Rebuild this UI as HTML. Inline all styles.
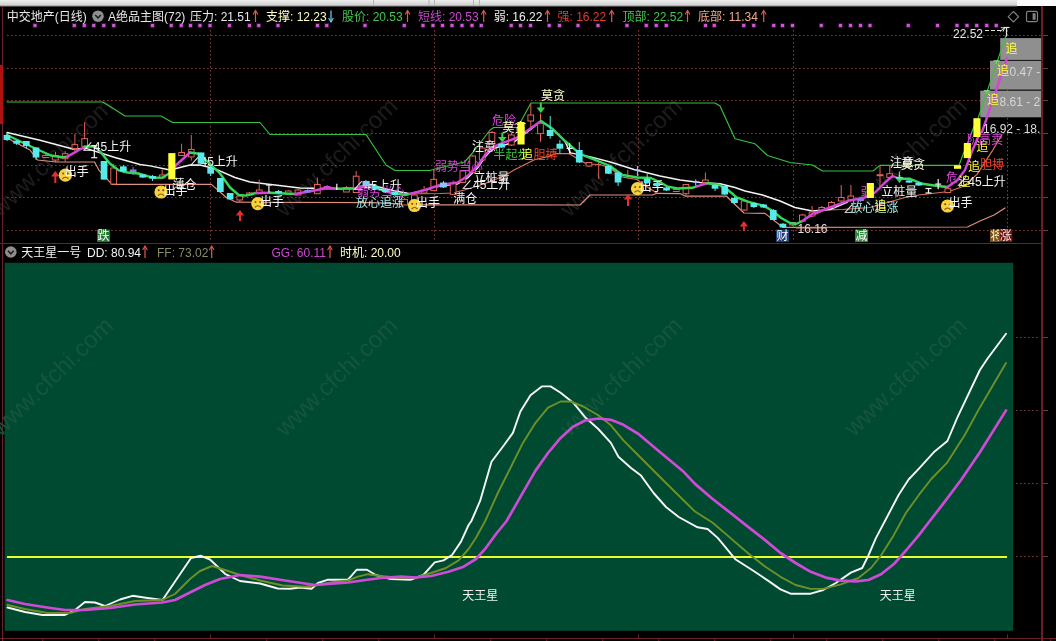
<!DOCTYPE html>
<html lang="zh-CN"><head><meta charset="utf-8"><title>中交地产 A绝品主图 天王星一号</title>
<style>html,body{margin:0;padding:0;background:#000;overflow:hidden}svg{display:block;will-change:transform}text{white-space:pre}</style>
</head><body>
<svg width="1056" height="641" viewBox="0 0 1056 641" font-family='"Liberation Sans","Noto Sans CJK SC",sans-serif' font-size="12" font-weight="400">
<rect x="0.0" y="0.0" width="1056.0" height="641.0" fill="#000" />
<defs><linearGradient id="ts" x1="0" y1="0" x2="0" y2="1"><stop offset="0" stop-color="#eeeeee"/><stop offset="0.7" stop-color="#d4d4d4"/><stop offset="1" stop-color="#8c8c8c"/></linearGradient></defs>
<rect x="0.0" y="0.0" width="1017.0" height="6.5" fill="url(#ts)" />
<rect x="1017.0" y="0.0" width="39.0" height="6.0" fill="#fbfbfb" />
<line x1="373.5" y1="0.0" x2="373.5" y2="5.0" stroke="#b4b4b4" stroke-width="1" />
<line x1="429.0" y1="0.0" x2="429.0" y2="5.0" stroke="#b4b4b4" stroke-width="1" />
<line x1="434.5" y1="0.0" x2="434.5" y2="5.0" stroke="#b4b4b4" stroke-width="1" />
<line x1="473.5" y1="0.0" x2="473.5" y2="5.0" stroke="#b4b4b4" stroke-width="1" />
<line x1="479.5" y1="0.0" x2="479.5" y2="5.0" stroke="#b4b4b4" stroke-width="1" />
<text transform="translate(57.5 163.0) rotate(-44)" text-anchor="middle" font-size="24" fill="#1d1d1d">www.cfchi.com</text>
<text transform="translate(342.0 163.0) rotate(-44)" text-anchor="middle" font-size="24" fill="#1d1d1d">www.cfchi.com</text>
<text transform="translate(626.5 163.0) rotate(-44)" text-anchor="middle" font-size="24" fill="#1d1d1d">www.cfchi.com</text>
<text transform="translate(911.0 163.0) rotate(-44)" text-anchor="middle" font-size="24" fill="#1d1d1d">www.cfchi.com</text>
<line x1="7.0" y1="35.5" x2="1041.0" y2="35.5" stroke="#581e1c" stroke-width="1" stroke-dasharray="2 2" shape-rendering="crispEdges"/>
<line x1="7.0" y1="35.5" x2="1041.0" y2="35.5" stroke="#7a4042" stroke-width="1" stroke-dasharray="1 3" shape-rendering="crispEdges"/>
<line x1="1043.0" y1="35.5" x2="1047.5" y2="35.5" stroke="#6a4040" stroke-width="1" shape-rendering="crispEdges"/>
<line x1="7.0" y1="68.5" x2="1041.0" y2="68.5" stroke="#581e1c" stroke-width="1" stroke-dasharray="2 2" shape-rendering="crispEdges"/>
<line x1="7.0" y1="68.5" x2="1041.0" y2="68.5" stroke="#7a4042" stroke-width="1" stroke-dasharray="1 3" shape-rendering="crispEdges"/>
<line x1="1043.0" y1="68.5" x2="1047.5" y2="68.5" stroke="#6a4040" stroke-width="1" shape-rendering="crispEdges"/>
<line x1="7.0" y1="100.5" x2="1041.0" y2="100.5" stroke="#581e1c" stroke-width="1" stroke-dasharray="2 2" shape-rendering="crispEdges"/>
<line x1="7.0" y1="100.5" x2="1041.0" y2="100.5" stroke="#7a4042" stroke-width="1" stroke-dasharray="1 3" shape-rendering="crispEdges"/>
<line x1="1043.0" y1="100.5" x2="1047.5" y2="100.5" stroke="#6a4040" stroke-width="1" shape-rendering="crispEdges"/>
<line x1="7.0" y1="133.5" x2="1041.0" y2="133.5" stroke="#581e1c" stroke-width="1" stroke-dasharray="2 2" shape-rendering="crispEdges"/>
<line x1="7.0" y1="133.5" x2="1041.0" y2="133.5" stroke="#7a4042" stroke-width="1" stroke-dasharray="1 3" shape-rendering="crispEdges"/>
<line x1="1043.0" y1="133.5" x2="1047.5" y2="133.5" stroke="#6a4040" stroke-width="1" shape-rendering="crispEdges"/>
<line x1="7.0" y1="165.5" x2="1041.0" y2="165.5" stroke="#581e1c" stroke-width="1" stroke-dasharray="2 2" shape-rendering="crispEdges"/>
<line x1="7.0" y1="165.5" x2="1041.0" y2="165.5" stroke="#7a4042" stroke-width="1" stroke-dasharray="1 3" shape-rendering="crispEdges"/>
<line x1="1043.0" y1="165.5" x2="1047.5" y2="165.5" stroke="#6a4040" stroke-width="1" shape-rendering="crispEdges"/>
<line x1="7.0" y1="197.5" x2="1041.0" y2="197.5" stroke="#581e1c" stroke-width="1" stroke-dasharray="2 2" shape-rendering="crispEdges"/>
<line x1="7.0" y1="197.5" x2="1041.0" y2="197.5" stroke="#7a4042" stroke-width="1" stroke-dasharray="1 3" shape-rendering="crispEdges"/>
<line x1="1043.0" y1="197.5" x2="1047.5" y2="197.5" stroke="#6a4040" stroke-width="1" shape-rendering="crispEdges"/>
<line x1="7.0" y1="230.5" x2="1041.0" y2="230.5" stroke="#581e1c" stroke-width="1" stroke-dasharray="2 2" shape-rendering="crispEdges"/>
<line x1="7.0" y1="230.5" x2="1041.0" y2="230.5" stroke="#7a4042" stroke-width="1" stroke-dasharray="1 3" shape-rendering="crispEdges"/>
<line x1="1043.0" y1="230.5" x2="1047.5" y2="230.5" stroke="#6a4040" stroke-width="1" shape-rendering="crispEdges"/>
<line x1="210.5" y1="30.0" x2="210.5" y2="242.0" stroke="#581e1c" stroke-width="1" stroke-dasharray="2 2" shape-rendering="crispEdges"/>
<line x1="210.5" y1="30.0" x2="210.5" y2="242.0" stroke="#7a4042" stroke-width="1" stroke-dasharray="1 3" shape-rendering="crispEdges"/>
<line x1="434.5" y1="30.0" x2="434.5" y2="242.0" stroke="#581e1c" stroke-width="1" stroke-dasharray="2 2" shape-rendering="crispEdges"/>
<line x1="434.5" y1="30.0" x2="434.5" y2="242.0" stroke="#7a4042" stroke-width="1" stroke-dasharray="1 3" shape-rendering="crispEdges"/>
<line x1="638.5" y1="30.0" x2="638.5" y2="242.0" stroke="#581e1c" stroke-width="1" stroke-dasharray="2 2" shape-rendering="crispEdges"/>
<line x1="638.5" y1="30.0" x2="638.5" y2="242.0" stroke="#7a4042" stroke-width="1" stroke-dasharray="1 3" shape-rendering="crispEdges"/>
<line x1="793.5" y1="30.0" x2="793.5" y2="242.0" stroke="#581e1c" stroke-width="1" stroke-dasharray="2 2" shape-rendering="crispEdges"/>
<line x1="793.5" y1="30.0" x2="793.5" y2="242.0" stroke="#7a4042" stroke-width="1" stroke-dasharray="1 3" shape-rendering="crispEdges"/>
<line x1="1007.5" y1="30.0" x2="1007.5" y2="242.0" stroke="#581e1c" stroke-width="1" stroke-dasharray="2 2" shape-rendering="crispEdges"/>
<line x1="1007.5" y1="30.0" x2="1007.5" y2="242.0" stroke="#7a4042" stroke-width="1" stroke-dasharray="1 3" shape-rendering="crispEdges"/>
<line x1="2.5" y1="6.0" x2="2.5" y2="641.0" stroke="#6c222c" stroke-width="1" shape-rendering="crispEdges"/>
<rect x="0.0" y="65.0" width="3.2" height="59.0" fill="#b01212" />
<rect x="1041.0" y="6.0" width="2.0" height="635.0" fill="#6e1e22" />
<line x1="0.0" y1="243.5" x2="1041.5" y2="243.5" stroke="#6c222c" stroke-width="1" shape-rendering="crispEdges"/>
<line x1="0.0" y1="638.5" x2="1056.0" y2="638.5" stroke="#6c222c" stroke-width="1" shape-rendering="crispEdges"/>
<line x1="210.5" y1="634.5" x2="210.5" y2="638.0" stroke="#6c222c" stroke-width="1" />
<line x1="434.5" y1="634.5" x2="434.5" y2="638.0" stroke="#6c222c" stroke-width="1" />
<line x1="638.5" y1="634.5" x2="638.5" y2="638.0" stroke="#6c222c" stroke-width="1" />
<line x1="793.5" y1="634.5" x2="793.5" y2="638.0" stroke="#6c222c" stroke-width="1" />
<line x1="1007.5" y1="634.5" x2="1007.5" y2="638.0" stroke="#6c222c" stroke-width="1" />
<line x1="42.7" y1="639.0" x2="42.7" y2="641.0" stroke="#6c222c" stroke-width="1" />
<line x1="98.7" y1="639.0" x2="98.7" y2="641.0" stroke="#6c222c" stroke-width="1" />
<line x1="154.7" y1="639.0" x2="154.7" y2="641.0" stroke="#6c222c" stroke-width="1" />
<line x1="266.7" y1="639.0" x2="266.7" y2="641.0" stroke="#6c222c" stroke-width="1" />
<line x1="322.7" y1="639.0" x2="322.7" y2="641.0" stroke="#6c222c" stroke-width="1" />
<line x1="378.7" y1="639.0" x2="378.7" y2="641.0" stroke="#6c222c" stroke-width="1" />
<line x1="490.7" y1="639.0" x2="490.7" y2="641.0" stroke="#6c222c" stroke-width="1" />
<line x1="546.7" y1="639.0" x2="546.7" y2="641.0" stroke="#6c222c" stroke-width="1" />
<line x1="602.7" y1="639.0" x2="602.7" y2="641.0" stroke="#6c222c" stroke-width="1" />
<line x1="658.7" y1="639.0" x2="658.7" y2="641.0" stroke="#6c222c" stroke-width="1" />
<line x1="714.7" y1="639.0" x2="714.7" y2="641.0" stroke="#6c222c" stroke-width="1" />
<line x1="770.7" y1="639.0" x2="770.7" y2="641.0" stroke="#6c222c" stroke-width="1" />
<line x1="826.7" y1="639.0" x2="826.7" y2="641.0" stroke="#6c222c" stroke-width="1" />
<line x1="882.7" y1="639.0" x2="882.7" y2="641.0" stroke="#6c222c" stroke-width="1" />
<line x1="938.7" y1="639.0" x2="938.7" y2="641.0" stroke="#6c222c" stroke-width="1" />
<line x1="994.7" y1="639.0" x2="994.7" y2="641.0" stroke="#6c222c" stroke-width="1" />
<line x1="1050.7" y1="639.0" x2="1050.7" y2="641.0" stroke="#6c222c" stroke-width="1" />
<rect x="32.7" y="23.2" width="4.6" height="4.6" fill="#4a154e" />
<rect x="33.5" y="24.0" width="3.0" height="3.0" fill="#c95ad0" />
<rect x="72.0" y="23.2" width="4.6" height="4.6" fill="#4a154e" />
<rect x="72.8" y="24.0" width="3.0" height="3.0" fill="#c95ad0" />
<rect x="82.0" y="23.2" width="4.6" height="4.6" fill="#4a154e" />
<rect x="82.8" y="24.0" width="3.0" height="3.0" fill="#c95ad0" />
<rect x="91.5" y="23.2" width="4.6" height="4.6" fill="#4a154e" />
<rect x="92.2" y="24.0" width="3.0" height="3.0" fill="#c95ad0" />
<rect x="101.5" y="23.2" width="4.6" height="4.6" fill="#4a154e" />
<rect x="102.2" y="24.0" width="3.0" height="3.0" fill="#c95ad0" />
<rect x="111.5" y="23.2" width="4.6" height="4.6" fill="#4a154e" />
<rect x="112.2" y="24.0" width="3.0" height="3.0" fill="#c95ad0" />
<rect x="150.2" y="23.2" width="4.6" height="4.6" fill="#4a154e" />
<rect x="151.0" y="24.0" width="3.0" height="3.0" fill="#c95ad0" />
<rect x="168.9" y="23.2" width="4.6" height="4.6" fill="#4a154e" />
<rect x="169.8" y="24.0" width="3.0" height="3.0" fill="#c95ad0" />
<rect x="178.9" y="23.2" width="4.6" height="4.6" fill="#4a154e" />
<rect x="179.8" y="24.0" width="3.0" height="3.0" fill="#c95ad0" />
<rect x="188.2" y="23.2" width="4.6" height="4.6" fill="#4a154e" />
<rect x="189.0" y="24.0" width="3.0" height="3.0" fill="#c95ad0" />
<rect x="197.7" y="23.2" width="4.6" height="4.6" fill="#4a154e" />
<rect x="198.5" y="24.0" width="3.0" height="3.0" fill="#c95ad0" />
<rect x="207.7" y="23.2" width="4.6" height="4.6" fill="#4a154e" />
<rect x="208.5" y="24.0" width="3.0" height="3.0" fill="#c95ad0" />
<rect x="227.2" y="23.2" width="4.6" height="4.6" fill="#4a154e" />
<rect x="228.0" y="24.0" width="3.0" height="3.0" fill="#c95ad0" />
<rect x="247.2" y="23.2" width="4.6" height="4.6" fill="#4a154e" />
<rect x="248.0" y="24.0" width="3.0" height="3.0" fill="#c95ad0" />
<rect x="256.4" y="23.2" width="4.6" height="4.6" fill="#4a154e" />
<rect x="257.2" y="24.0" width="3.0" height="3.0" fill="#c95ad0" />
<rect x="275.7" y="23.2" width="4.6" height="4.6" fill="#4a154e" />
<rect x="276.5" y="24.0" width="3.0" height="3.0" fill="#c95ad0" />
<rect x="315.2" y="23.2" width="4.6" height="4.6" fill="#4a154e" />
<rect x="316.0" y="24.0" width="3.0" height="3.0" fill="#c95ad0" />
<rect x="324.4" y="23.2" width="4.6" height="4.6" fill="#4a154e" />
<rect x="325.2" y="24.0" width="3.0" height="3.0" fill="#c95ad0" />
<rect x="362.7" y="23.2" width="4.6" height="4.6" fill="#4a154e" />
<rect x="363.5" y="24.0" width="3.0" height="3.0" fill="#c95ad0" />
<rect x="401.9" y="23.2" width="4.6" height="4.6" fill="#4a154e" />
<rect x="402.8" y="24.0" width="3.0" height="3.0" fill="#c95ad0" />
<rect x="420.7" y="23.2" width="4.6" height="4.6" fill="#4a154e" />
<rect x="421.5" y="24.0" width="3.0" height="3.0" fill="#c95ad0" />
<rect x="430.7" y="23.2" width="4.6" height="4.6" fill="#4a154e" />
<rect x="431.5" y="24.0" width="3.0" height="3.0" fill="#c95ad0" />
<rect x="440.2" y="23.2" width="4.6" height="4.6" fill="#4a154e" />
<rect x="441.0" y="24.0" width="3.0" height="3.0" fill="#c95ad0" />
<rect x="449.7" y="23.2" width="4.6" height="4.6" fill="#4a154e" />
<rect x="450.5" y="24.0" width="3.0" height="3.0" fill="#c95ad0" />
<rect x="459.7" y="23.2" width="4.6" height="4.6" fill="#4a154e" />
<rect x="460.5" y="24.0" width="3.0" height="3.0" fill="#c95ad0" />
<rect x="469.7" y="23.2" width="4.6" height="4.6" fill="#4a154e" />
<rect x="470.5" y="24.0" width="3.0" height="3.0" fill="#c95ad0" />
<rect x="478.9" y="23.2" width="4.6" height="4.6" fill="#4a154e" />
<rect x="479.8" y="24.0" width="3.0" height="3.0" fill="#c95ad0" />
<rect x="508.9" y="23.2" width="4.6" height="4.6" fill="#4a154e" />
<rect x="509.8" y="24.0" width="3.0" height="3.0" fill="#c95ad0" />
<rect x="518.2" y="23.2" width="4.6" height="4.6" fill="#4a154e" />
<rect x="519.0" y="24.0" width="3.0" height="3.0" fill="#c95ad0" />
<rect x="528.2" y="23.2" width="4.6" height="4.6" fill="#4a154e" />
<rect x="529.0" y="24.0" width="3.0" height="3.0" fill="#c95ad0" />
<rect x="547.0" y="23.2" width="4.6" height="4.6" fill="#4a154e" />
<rect x="547.8" y="24.0" width="3.0" height="3.0" fill="#c95ad0" />
<rect x="557.2" y="23.2" width="4.6" height="4.6" fill="#4a154e" />
<rect x="558.0" y="24.0" width="3.0" height="3.0" fill="#c95ad0" />
<rect x="575.7" y="23.2" width="4.6" height="4.6" fill="#4a154e" />
<rect x="576.5" y="24.0" width="3.0" height="3.0" fill="#c95ad0" />
<rect x="595.7" y="23.2" width="4.6" height="4.6" fill="#4a154e" />
<rect x="596.5" y="24.0" width="3.0" height="3.0" fill="#c95ad0" />
<rect x="624.7" y="23.2" width="4.6" height="4.6" fill="#4a154e" />
<rect x="625.5" y="24.0" width="3.0" height="3.0" fill="#c95ad0" />
<rect x="644.0" y="23.2" width="4.6" height="4.6" fill="#4a154e" />
<rect x="644.8" y="24.0" width="3.0" height="3.0" fill="#c95ad0" />
<rect x="654.0" y="23.2" width="4.6" height="4.6" fill="#4a154e" />
<rect x="654.8" y="24.0" width="3.0" height="3.0" fill="#c95ad0" />
<rect x="664.0" y="23.2" width="4.6" height="4.6" fill="#4a154e" />
<rect x="664.8" y="24.0" width="3.0" height="3.0" fill="#c95ad0" />
<rect x="703.2" y="23.2" width="4.6" height="4.6" fill="#4a154e" />
<rect x="704.0" y="24.0" width="3.0" height="3.0" fill="#c95ad0" />
<rect x="712.0" y="23.2" width="4.6" height="4.6" fill="#4a154e" />
<rect x="712.8" y="24.0" width="3.0" height="3.0" fill="#c95ad0" />
<rect x="741.5" y="23.2" width="4.6" height="4.6" fill="#4a154e" />
<rect x="742.2" y="24.0" width="3.0" height="3.0" fill="#c95ad0" />
<rect x="751.5" y="23.2" width="4.6" height="4.6" fill="#4a154e" />
<rect x="752.2" y="24.0" width="3.0" height="3.0" fill="#c95ad0" />
<rect x="771.5" y="23.2" width="4.6" height="4.6" fill="#4a154e" />
<rect x="772.2" y="24.0" width="3.0" height="3.0" fill="#c95ad0" />
<rect x="780.2" y="23.2" width="4.6" height="4.6" fill="#4a154e" />
<rect x="781.0" y="24.0" width="3.0" height="3.0" fill="#c95ad0" />
<rect x="790.2" y="23.2" width="4.6" height="4.6" fill="#4a154e" />
<rect x="791.0" y="24.0" width="3.0" height="3.0" fill="#c95ad0" />
<rect x="819.0" y="23.2" width="4.6" height="4.6" fill="#4a154e" />
<rect x="819.8" y="24.0" width="3.0" height="3.0" fill="#c95ad0" />
<rect x="838.2" y="23.2" width="4.6" height="4.6" fill="#4a154e" />
<rect x="839.0" y="24.0" width="3.0" height="3.0" fill="#c95ad0" />
<rect x="848.2" y="23.2" width="4.6" height="4.6" fill="#4a154e" />
<rect x="849.0" y="24.0" width="3.0" height="3.0" fill="#c95ad0" />
<rect x="858.2" y="23.2" width="4.6" height="4.6" fill="#4a154e" />
<rect x="859.0" y="24.0" width="3.0" height="3.0" fill="#c95ad0" />
<rect x="867.7" y="23.2" width="4.6" height="4.6" fill="#4a154e" />
<rect x="868.5" y="24.0" width="3.0" height="3.0" fill="#c95ad0" />
<rect x="906.0" y="23.2" width="4.6" height="4.6" fill="#4a154e" />
<rect x="906.8" y="24.0" width="3.0" height="3.0" fill="#c95ad0" />
<rect x="935.2" y="23.2" width="4.6" height="4.6" fill="#4a154e" />
<rect x="936.0" y="24.0" width="3.0" height="3.0" fill="#c95ad0" />
<rect x="954.7" y="23.2" width="4.6" height="4.6" fill="#4a154e" />
<rect x="955.5" y="24.0" width="3.0" height="3.0" fill="#c95ad0" />
<rect x="964.7" y="23.2" width="4.6" height="4.6" fill="#4a154e" />
<rect x="965.5" y="24.0" width="3.0" height="3.0" fill="#c95ad0" />
<rect x="974.5" y="23.2" width="4.6" height="4.6" fill="#4a154e" />
<rect x="975.2" y="24.0" width="3.0" height="3.0" fill="#c95ad0" />
<rect x="984.5" y="23.2" width="4.6" height="4.6" fill="#4a154e" />
<rect x="985.2" y="24.0" width="3.0" height="3.0" fill="#c95ad0" />
<rect x="994.0" y="23.2" width="4.6" height="4.6" fill="#4a154e" />
<rect x="994.8" y="24.0" width="3.0" height="3.0" fill="#c95ad0" />
<rect x="1000.2" y="38.1" width="40.8" height="21.8" fill="#8f8f8f" />
<rect x="990.0" y="60.8" width="51.0" height="28.8" fill="#8f8f8f" />
<rect x="980.2" y="90.7" width="60.8" height="26.6" fill="#8f8f8f" />
<polyline points="7.0,102.0 102.5,102.0 111.0,107.0 125.0,116.0 161.0,116.0 172.5,122.5 260.0,122.5 270.0,134.5 366.0,134.5 386.0,165.0 395.0,170.5 430.0,170.5 435.0,169.0 464.5,162.0 473.0,152.5 490.0,130.0 493.8,127.5 517.5,127.5 531.0,103.0 715.0,103.0 720.0,106.0 735.0,138.8 755.0,143.8 767.5,155.5 790.0,162.5 812.5,165.0 822.5,171.0 873.0,171.0 880.0,165.4 959.0,165.4 964.0,152.0 972.6,130.0 978.4,117.3 1005.9,35.9" fill="none" stroke="#38c23c" stroke-width="1.15" stroke-linejoin="round" stroke-linecap="round" />
<polyline points="7.0,137.5 12.5,141.0 30.0,150.0 37.5,160.0 56.0,162.0 94.6,162.0 99.0,170.3 112.0,184.3 211.3,184.4 226.3,197.5 236.3,202.2 372.0,202.7 420.0,204.8 580.0,205.0 590.0,195.0 652.5,195.0 656.7,193.3 680.4,193.7 685.6,196.2 726.4,196.2 744.0,213.0 765.0,213.4 782.7,227.3 967.5,227.0 980.0,221.0 994.0,215.0 1005.0,208.0" fill="none" stroke="#e0907e" stroke-width="1.2" stroke-linejoin="round" stroke-linecap="round" />
<polyline points="403.0,194.0 440.0,193.5 452.0,193.0 464.5,190.0 484.5,183.8 504.0,176.0 514.0,170.0 535.0,159.5 548.0,156.6 555.6,153.6 569.0,153.6 576.4,158.0 586.7,164.0 600.0,164.5 610.0,168.0 622.0,177.0 637.0,179.5 645.0,185.6 656.7,193.0" fill="none" stroke="#e0705c" stroke-width="1.2" stroke-linejoin="round" stroke-linecap="round" />
<polyline points="802.5,220.0 825.0,210.0 842.5,209.5 870.0,207.5 905.0,197.5 919.0,195.0 949.0,191.5 963.7,186.3 977.0,174.4 993.3,149.3 1002.0,134.4" fill="none" stroke="#e0705c" stroke-width="1.2" stroke-linejoin="round" stroke-linecap="round" />
<polyline points="7.0,132.5 40.0,140.2 72.8,149.0 86.0,148.4 115.0,157.5 140.0,164.5 150.0,165.9 170.0,170.0 180.0,167.5 190.0,165.0 200.0,165.0 215.0,168.8 235.0,177.5 250.0,182.0 275.0,185.0 300.0,188.0 337.5,188.8 360.0,188.0 370.0,184.5 390.0,190.0 410.0,193.8 425.0,190.0 440.0,186.0 457.5,184.0 467.5,178.0 477.5,168.0 485.0,157.0 492.5,149.0 514.0,142.0 530.0,130.0 541.0,121.0 552.5,129.0 565.0,141.5 570.4,152.9 589.7,156.6 612.0,162.5 634.0,169.5 640.0,171.0 660.0,176.0 680.0,180.0 700.0,182.5 720.0,183.8 735.0,187.5 745.0,191.0 762.5,195.0 780.0,201.0 795.0,207.5 812.5,211.0 830.0,209.5 847.5,202.0" fill="none" stroke="#f4f4f4" stroke-width="1.45" stroke-linejoin="round" stroke-linecap="round" />
<line x1="45.8" y1="153.0" x2="45.8" y2="158.0" stroke="#e26258" stroke-width="1" />
<rect x="42.9" y="155.5" width="5.7" height="2.0" fill="#000" stroke="#e26258" stroke-width="1"/>
<line x1="55.5" y1="152.0" x2="55.5" y2="162.0" stroke="#e26258" stroke-width="1" />
<rect x="52.6" y="155.5" width="5.7" height="4.5" fill="#000" stroke="#e26258" stroke-width="1"/>
<line x1="65.2" y1="151.0" x2="65.2" y2="162.0" stroke="#e26258" stroke-width="1" />
<rect x="62.3" y="153.7" width="5.7" height="5.0" fill="#000" stroke="#e26258" stroke-width="1"/>
<line x1="74.9" y1="134.0" x2="74.9" y2="153.0" stroke="#e26258" stroke-width="1" />
<rect x="72.0" y="144.6" width="5.7" height="3.8" fill="#000" stroke="#e26258" stroke-width="1"/>
<line x1="84.6" y1="122.2" x2="84.6" y2="150.0" stroke="#e26258" stroke-width="1" />
<rect x="81.8" y="138.6" width="5.7" height="7.6" fill="#000" stroke="#e26258" stroke-width="1"/>
<line x1="113.7" y1="163.7" x2="113.7" y2="184.0" stroke="#e26258" stroke-width="1" />
<rect x="110.8" y="168.0" width="5.7" height="16.0" fill="#000" stroke="#e26258" stroke-width="1"/>
<line x1="162.2" y1="169.5" x2="162.2" y2="178.0" stroke="#e26258" stroke-width="1" />
<rect x="159.3" y="175.0" width="5.7" height="3.0" fill="#000" stroke="#e26258" stroke-width="1"/>
<line x1="181.6" y1="143.7" x2="181.6" y2="155.5" stroke="#e26258" stroke-width="1" />
<rect x="178.8" y="152.5" width="5.7" height="3.0" fill="#000" stroke="#e26258" stroke-width="1"/>
<line x1="191.3" y1="135.0" x2="191.3" y2="160.6" stroke="#e26258" stroke-width="1" />
<rect x="188.4" y="149.4" width="5.7" height="7.5" fill="#000" stroke="#e26258" stroke-width="1"/>
<line x1="239.8" y1="196.0" x2="239.8" y2="202.5" stroke="#e26258" stroke-width="1" />
<rect x="236.9" y="196.0" width="5.7" height="4.0" fill="#000" stroke="#e26258" stroke-width="1"/>
<line x1="249.5" y1="192.0" x2="249.5" y2="196.0" stroke="#e26258" stroke-width="1" />
<rect x="246.6" y="193.0" width="5.7" height="2.0" fill="#000" stroke="#e26258" stroke-width="1"/>
<line x1="259.2" y1="179.5" x2="259.2" y2="194.0" stroke="#e26258" stroke-width="1" />
<rect x="256.4" y="190.0" width="5.7" height="3.7" fill="#000" stroke="#e26258" stroke-width="1"/>
<line x1="288.3" y1="190.0" x2="288.3" y2="194.0" stroke="#e26258" stroke-width="1" />
<rect x="285.4" y="191.0" width="5.7" height="3.0" fill="#000" stroke="#e26258" stroke-width="1"/>
<line x1="298.0" y1="189.0" x2="298.0" y2="195.0" stroke="#e26258" stroke-width="1" />
<rect x="295.1" y="190.0" width="5.7" height="5.0" fill="#000" stroke="#e26258" stroke-width="1"/>
<line x1="317.4" y1="177.5" x2="317.4" y2="193.7" stroke="#e26258" stroke-width="1" />
<rect x="314.5" y="184.5" width="5.7" height="9.2" fill="#000" stroke="#e26258" stroke-width="1"/>
<line x1="346.5" y1="186.0" x2="346.5" y2="192.0" stroke="#e26258" stroke-width="1" />
<rect x="343.6" y="187.5" width="5.7" height="4.5" fill="#000" stroke="#e26258" stroke-width="1"/>
<line x1="356.2" y1="171.0" x2="356.2" y2="192.5" stroke="#e26258" stroke-width="1" />
<rect x="353.3" y="176.2" width="5.7" height="16.3" fill="#000" stroke="#e26258" stroke-width="1"/>
<line x1="404.7" y1="198.0" x2="404.7" y2="205.0" stroke="#e26258" stroke-width="1" />
<rect x="401.8" y="199.4" width="5.7" height="5.6" fill="#000" stroke="#e26258" stroke-width="1"/>
<line x1="414.4" y1="194.0" x2="414.4" y2="201.0" stroke="#e26258" stroke-width="1" />
<rect x="411.5" y="195.0" width="5.7" height="5.0" fill="#000" stroke="#e26258" stroke-width="1"/>
<line x1="424.1" y1="186.0" x2="424.1" y2="193.0" stroke="#e26258" stroke-width="1" />
<rect x="421.2" y="190.0" width="5.7" height="3.0" fill="#000" stroke="#e26258" stroke-width="1"/>
<line x1="433.8" y1="170.0" x2="433.8" y2="190.6" stroke="#e26258" stroke-width="1" />
<rect x="430.9" y="179.4" width="5.7" height="11.2" fill="#000" stroke="#e26258" stroke-width="1"/>
<line x1="453.2" y1="180.6" x2="453.2" y2="194.4" stroke="#e26258" stroke-width="1" />
<rect x="450.3" y="183.7" width="5.7" height="10.7" fill="#000" stroke="#e26258" stroke-width="1"/>
<line x1="462.9" y1="170.0" x2="462.9" y2="183.0" stroke="#e26258" stroke-width="1" />
<rect x="460.0" y="171.0" width="5.7" height="11.5" fill="#000" stroke="#e26258" stroke-width="1"/>
<line x1="472.6" y1="155.0" x2="472.6" y2="173.0" stroke="#e26258" stroke-width="1" />
<rect x="469.7" y="156.0" width="5.7" height="16.5" fill="#000" stroke="#e26258" stroke-width="1"/>
<line x1="482.3" y1="146.0" x2="482.3" y2="161.0" stroke="#e26258" stroke-width="1" />
<rect x="479.4" y="148.0" width="5.7" height="12.0" fill="#000" stroke="#e26258" stroke-width="1"/>
<line x1="492.0" y1="131.0" x2="492.0" y2="149.0" stroke="#e26258" stroke-width="1" />
<rect x="489.1" y="132.5" width="5.7" height="16.2" fill="#000" stroke="#e26258" stroke-width="1"/>
<line x1="511.4" y1="133.0" x2="511.4" y2="146.0" stroke="#e26258" stroke-width="1" />
<rect x="508.5" y="135.0" width="5.7" height="10.0" fill="#000" stroke="#e26258" stroke-width="1"/>
<line x1="530.8" y1="104.0" x2="530.8" y2="127.0" stroke="#e26258" stroke-width="1" />
<rect x="527.9" y="115.0" width="5.7" height="6.0" fill="#000" stroke="#e26258" stroke-width="1"/>
<line x1="540.5" y1="113.6" x2="540.5" y2="141.8" stroke="#e26258" stroke-width="1" />
<rect x="537.6" y="123.3" width="5.7" height="10.3" fill="#000" stroke="#e26258" stroke-width="1"/>
<line x1="589.0" y1="162.0" x2="589.0" y2="167.0" stroke="#e26258" stroke-width="1" />
<rect x="586.1" y="162.5" width="5.7" height="3.5" fill="#000" stroke="#e26258" stroke-width="1"/>
<line x1="598.7" y1="161.0" x2="598.7" y2="179.0" stroke="#e26258" stroke-width="1" />
<line x1="627.8" y1="170.0" x2="627.8" y2="178.7" stroke="#e26258" stroke-width="1" />
<line x1="676.3" y1="189.0" x2="676.3" y2="192.0" stroke="#e26258" stroke-width="1" />
<rect x="673.4" y="189.5" width="5.7" height="2.0" fill="#000" stroke="#e26258" stroke-width="1"/>
<line x1="686.0" y1="184.0" x2="686.0" y2="196.0" stroke="#e26258" stroke-width="1" />
<rect x="683.1" y="184.5" width="5.7" height="9.2" fill="#000" stroke="#e26258" stroke-width="1"/>
<line x1="705.4" y1="172.5" x2="705.4" y2="183.0" stroke="#e26258" stroke-width="1" />
<rect x="702.5" y="180.0" width="5.7" height="2.5" fill="#000" stroke="#e26258" stroke-width="1"/>
<line x1="744.2" y1="200.0" x2="744.2" y2="211.0" stroke="#e26258" stroke-width="1" />
<rect x="741.3" y="201.0" width="5.7" height="9.0" fill="#000" stroke="#e26258" stroke-width="1"/>
<line x1="792.7" y1="222.0" x2="792.7" y2="226.0" stroke="#e26258" stroke-width="1" />
<rect x="789.8" y="222.5" width="5.7" height="2.5" fill="#000" stroke="#e26258" stroke-width="1"/>
<line x1="802.4" y1="214.0" x2="802.4" y2="222.0" stroke="#e26258" stroke-width="1" />
<rect x="799.5" y="215.0" width="5.7" height="6.0" fill="#000" stroke="#e26258" stroke-width="1"/>
<line x1="812.1" y1="206.0" x2="812.1" y2="217.0" stroke="#e26258" stroke-width="1" />
<rect x="809.2" y="212.0" width="5.7" height="4.0" fill="#000" stroke="#e26258" stroke-width="1"/>
<line x1="821.8" y1="206.0" x2="821.8" y2="211.0" stroke="#e26258" stroke-width="1" />
<rect x="818.9" y="207.5" width="5.7" height="2.5" fill="#000" stroke="#e26258" stroke-width="1"/>
<line x1="831.5" y1="201.0" x2="831.5" y2="208.0" stroke="#e26258" stroke-width="1" />
<rect x="828.6" y="202.5" width="5.7" height="5.0" fill="#000" stroke="#e26258" stroke-width="1"/>
<line x1="841.2" y1="185.0" x2="841.2" y2="202.0" stroke="#e26258" stroke-width="1" />
<rect x="838.3" y="197.5" width="5.7" height="3.5" fill="#000" stroke="#e26258" stroke-width="1"/>
<line x1="850.9" y1="185.0" x2="850.9" y2="201.0" stroke="#e26258" stroke-width="1" />
<rect x="848.0" y="196.0" width="5.7" height="4.0" fill="#000" stroke="#e26258" stroke-width="1"/>
<line x1="880.0" y1="165.5" x2="880.0" y2="187.8" stroke="#e26258" stroke-width="1" />
<rect x="877.1" y="174.7" width="5.7" height="1.0" fill="#000" stroke="#e26258" stroke-width="1"/>
<line x1="889.7" y1="165.5" x2="889.7" y2="179.0" stroke="#e26258" stroke-width="1" />
<rect x="886.8" y="173.7" width="5.7" height="3.7" fill="#000" stroke="#e26258" stroke-width="1"/>
<line x1="947.9" y1="188.0" x2="947.9" y2="193.0" stroke="#e26258" stroke-width="1" />
<rect x="945.0" y="188.7" width="5.7" height="3.8" fill="#000" stroke="#e26258" stroke-width="1"/>
<line x1="983.8" y1="90.7" x2="989.8" y2="90.7" stroke="#7ee07e" stroke-width="1.2" />
<line x1="986.8" y1="90.7" x2="986.8" y2="93.7" stroke="#7ee07e" stroke-width="1" />
<line x1="993.6" y1="60.8" x2="999.6" y2="60.8" stroke="#7ee07e" stroke-width="1.2" />
<line x1="996.6" y1="60.8" x2="996.6" y2="63.8" stroke="#7ee07e" stroke-width="1" />
<line x1="1003.5" y1="27.5" x2="1009.5" y2="27.5" stroke="#e8e8e8" stroke-width="1.2" />
<line x1="1006.5" y1="27.5" x2="1006.5" y2="36.5" stroke="#e8e8e8" stroke-width="1.2" />
<polyline points="7.0,135.0 22.5,142.5 37.5,149.5 51.0,155.5 62.0,157.2 67.3,156.6" fill="none" stroke="#34d858" stroke-width="2.4" stroke-linejoin="round" stroke-linecap="round" />
<polyline points="67.3,156.6 84.8,146.8" fill="none" stroke="#d246d6" stroke-width="2.4" stroke-linejoin="round" stroke-linecap="round" />
<polyline points="84.8,146.8 94.6,146.2 101.2,152.8 110.0,163.7 118.7,170.3 127.4,172.5 138.4,173.5 150.0,176.8 155.0,177.8 162.5,177.5 170.0,173.0" fill="none" stroke="#34d858" stroke-width="2.4" stroke-linejoin="round" stroke-linecap="round" />
<polyline points="170.0,173.0 176.2,165.0 190.0,152.5" fill="none" stroke="#d246d6" stroke-width="2.4" stroke-linejoin="round" stroke-linecap="round" />
<polyline points="190.0,152.5 198.7,153.8 210.0,163.8 220.0,173.5 230.0,187.5 238.7,195.0 246.0,195.6 256.0,193.0" fill="none" stroke="#34d858" stroke-width="2.4" stroke-linejoin="round" stroke-linecap="round" />
<polyline points="256.0,193.0 270.0,192.8" fill="none" stroke="#d246d6" stroke-width="2.4" stroke-linejoin="round" stroke-linecap="round" />
<polyline points="270.0,192.8 295.0,194.0" fill="none" stroke="#34d858" stroke-width="2.4" stroke-linejoin="round" stroke-linecap="round" />
<polyline points="295.0,194.0 310.0,191.2 327.5,188.0 337.5,188.5" fill="none" stroke="#d246d6" stroke-width="2.4" stroke-linejoin="round" stroke-linecap="round" />
<polyline points="337.5,188.8 355.0,188.6" fill="none" stroke="#34d858" stroke-width="2.4" stroke-linejoin="round" stroke-linecap="round" />
<polyline points="355.0,188.6 367.5,185.0" fill="none" stroke="#d246d6" stroke-width="2.4" stroke-linejoin="round" stroke-linecap="round" />
<polyline points="367.5,185.0 370.0,186.0 390.0,192.5 405.0,195.0 410.0,193.8" fill="none" stroke="#34d858" stroke-width="2.4" stroke-linejoin="round" stroke-linecap="round" />
<polyline points="410.0,193.8 425.0,190.0 440.0,185.0 457.5,182.5 467.5,176.0 477.5,166.0 485.0,155.0 492.5,147.5 500.0,143.8 517.5,137.5 530.0,128.8 541.0,121.0" fill="none" stroke="#d246d6" stroke-width="2.4" stroke-linejoin="round" stroke-linecap="round" />
<polyline points="541.0,121.0 552.5,128.8 565.0,141.0 580.0,153.8 592.5,158.8 610.0,166.0 622.5,175.0 637.5,177.5 650.8,178.0 659.7,182.0 667.0,186.3 677.5,188.5 692.3,187.8 696.7,186.3" fill="none" stroke="#34d858" stroke-width="2.4" stroke-linejoin="round" stroke-linecap="round" />
<polyline points="696.7,186.3 707.0,183.3" fill="none" stroke="#d246d6" stroke-width="2.4" stroke-linejoin="round" stroke-linecap="round" />
<polyline points="707.0,183.3 719.0,184.8 727.9,190.0 736.7,197.4 748.6,201.9 763.4,205.6 772.3,210.7 781.2,218.0 790.0,223.0 796.0,224.0 802.5,221.0" fill="none" stroke="#34d858" stroke-width="2.4" stroke-linejoin="round" stroke-linecap="round" />
<polyline points="802.5,221.0 812.5,213.8 830.0,207.5 847.5,201.0 865.0,197.5 875.0,192.5 885.0,182.5 892.5,176.0 900.0,178.8" fill="none" stroke="#d246d6" stroke-width="2.4" stroke-linejoin="round" stroke-linecap="round" />
<polyline points="900.0,178.8 910.0,178.8 922.5,183.8 937.5,186.0 947.5,187.0" fill="none" stroke="#34d858" stroke-width="2.4" stroke-linejoin="round" stroke-linecap="round" />
<polyline points="947.5,187.0 957.5,180.0 965.0,170.0 972.5,150.0 980.0,133.0 982.0,132.0 1007.0,58.4" fill="none" stroke="#d246d6" stroke-width="2.4" stroke-linejoin="round" stroke-linecap="round" />
<line x1="94.3" y1="145.7" x2="94.3" y2="157.7" stroke="#f4f4f4" stroke-width="1.2" />
<line x1="91.3" y1="145.7" x2="97.3" y2="145.7" stroke="#f4f4f4" stroke-width="1.2" />
<line x1="91.3" y1="157.7" x2="97.3" y2="157.7" stroke="#f4f4f4" stroke-width="1.2" />
<line x1="268.9" y1="185.0" x2="268.9" y2="192.5" stroke="#f4f4f4" stroke-width="1.2" />
<line x1="265.9" y1="185.0" x2="271.9" y2="185.0" stroke="#f4f4f4" stroke-width="1.2" />
<line x1="336.8" y1="183.7" x2="336.8" y2="190.0" stroke="#f4f4f4" stroke-width="1.2" />
<line x1="569.6" y1="143.3" x2="569.6" y2="153.6" stroke="#f4f4f4" stroke-width="1.2" />
<line x1="566.6" y1="148.4" x2="572.6" y2="148.4" stroke="#f4f4f4" stroke-width="1.2" />
<line x1="637.5" y1="166.0" x2="637.5" y2="176.0" stroke="#a6b4ff" stroke-width="1.2" />
<line x1="634.5" y1="170.0" x2="640.5" y2="170.0" stroke="#a6b4ff" stroke-width="1.2" />
<line x1="695.7" y1="179.6" x2="695.7" y2="185.6" stroke="#a6b4ff" stroke-width="1.2" />
<line x1="692.7" y1="182.0" x2="698.7" y2="182.0" stroke="#a6b4ff" stroke-width="1.2" />
<line x1="928.5" y1="188.5" x2="928.5" y2="193.0" stroke="#f4f4f4" stroke-width="1.2" />
<line x1="925.5" y1="188.5" x2="931.5" y2="188.5" stroke="#f4f4f4" stroke-width="1.2" />
<line x1="925.5" y1="193.0" x2="931.5" y2="193.0" stroke="#f4f4f4" stroke-width="1.2" />
<line x1="938.2" y1="178.9" x2="938.2" y2="189.3" stroke="#f4f4f4" stroke-width="1.2" />
<line x1="935.2" y1="184.1" x2="941.2" y2="184.1" stroke="#f4f4f4" stroke-width="1.2" />
<path d="M55.3 171.0 L51.1 176.5 L59.5 176.5 Z" fill="#e03030"/>
<line x1="55.3" y1="175.0" x2="55.3" y2="183.0" stroke="#e03030" stroke-width="2" />
<path d="M240.0 210.0 L235.8 215.5 L244.2 215.5 Z" fill="#e03030"/>
<line x1="240.0" y1="214.0" x2="240.0" y2="221.0" stroke="#e03030" stroke-width="2" />
<path d="M628.0 194.0 L623.8 199.5 L632.2 199.5 Z" fill="#e03030"/>
<line x1="628.0" y1="198.0" x2="628.0" y2="206.0" stroke="#e03030" stroke-width="2" />
<path d="M743.9 221.0 L739.7 226.5 L748.1 226.5 Z" fill="#e03030"/>
<line x1="743.9" y1="225.0" x2="743.9" y2="231.0" stroke="#e03030" stroke-width="2" />
<path d="M502.3 142.5 L498.0 137.0 L506.6 137.0 Z" fill="#3cd050"/>
<line x1="502.3" y1="132.5" x2="502.3" y2="138.5" stroke="#3cd050" stroke-width="2" />
<path d="M540.8 113.0 L536.5 107.5 L545.1 107.5 Z" fill="#3cd050"/>
<line x1="540.8" y1="102.5" x2="540.8" y2="109.0" stroke="#3cd050" stroke-width="2" />
<path d="M899.5 183.0 L895.2 177.5 L903.8 177.5 Z" fill="#3cd050"/>
<line x1="899.5" y1="175.0" x2="899.5" y2="179.0" stroke="#3cd050" stroke-width="2" />
<g transform="translate(65.4 175.2)"><circle r="6.6" fill="#f6d23c"/><circle cx="-2.3" cy="-1.8" r="1" fill="#7a4a10"/><circle cx="2.3" cy="-1.8" r="1" fill="#7a4a10"/><path d="M-3 3.6 Q0 0.4 3 3.6" stroke="#7a4a10" stroke-width="1.1" fill="none"/></g>
<g transform="translate(161.0 192.0)"><circle r="6.6" fill="#f6d23c"/><circle cx="-2.3" cy="-1.8" r="1" fill="#7a4a10"/><circle cx="2.3" cy="-1.8" r="1" fill="#7a4a10"/><path d="M-3 3.6 Q0 0.4 3 3.6" stroke="#7a4a10" stroke-width="1.1" fill="none"/></g>
<g transform="translate(257.8 203.7)"><circle r="6.6" fill="#f6d23c"/><circle cx="-2.3" cy="-1.8" r="1" fill="#7a4a10"/><circle cx="2.3" cy="-1.8" r="1" fill="#7a4a10"/><path d="M-3 3.6 Q0 0.4 3 3.6" stroke="#7a4a10" stroke-width="1.1" fill="none"/></g>
<g transform="translate(414.5 205.5)"><circle r="6.6" fill="#f6d23c"/><circle cx="-2.3" cy="-1.8" r="1" fill="#7a4a10"/><circle cx="2.3" cy="-1.8" r="1" fill="#7a4a10"/><path d="M-3 3.6 Q0 0.4 3 3.6" stroke="#7a4a10" stroke-width="1.1" fill="none"/></g>
<g transform="translate(637.5 188.7)"><circle r="6.6" fill="#f6d23c"/><circle cx="-2.3" cy="-1.8" r="1" fill="#7a4a10"/><circle cx="2.3" cy="-1.8" r="1" fill="#7a4a10"/><path d="M-3 3.6 Q0 0.4 3 3.6" stroke="#7a4a10" stroke-width="1.1" fill="none"/></g>
<g transform="translate(947.5 206.0)"><circle r="6.6" fill="#f6d23c"/><circle cx="-2.3" cy="-1.8" r="1" fill="#7a4a10"/><circle cx="2.3" cy="-1.8" r="1" fill="#7a4a10"/><path d="M-3 3.6 Q0 0.4 3 3.6" stroke="#7a4a10" stroke-width="1.1" fill="none"/></g>
<text x="81.8" y="150.8" fill="#f4f4f4" font-size="12" >∠45上升</text>
<text x="64.8" y="176.0" fill="#f4f4f4" font-size="12" >出手</text>
<text x="172.6" y="189.0" fill="#f4f4f4" font-size="12" >薄仓</text>
<text x="163.5" y="194.6" fill="#f4f4f4" font-size="12" >出手</text>
<text x="188.5" y="166.3" fill="#f4f4f4" font-size="12" >∠45上升</text>
<text x="260.0" y="205.8" fill="#f4f4f4" font-size="12" >出手</text>
<text x="352.3" y="190.3" fill="#f4f4f4" font-size="12" >∠45上升</text>
<text x="357.0" y="196.3" fill="#d246d6" font-size="12" >弱势当心</text>
<text x="356.0" y="207.3" fill="#a8ecec" font-size="12" >放心追涨</text>
<text x="416.0" y="206.8" fill="#f4f4f4" font-size="12" >出手</text>
<text x="453.3" y="203.1" fill="#f4f4f4" font-size="12" >满仓</text>
<text x="435.0" y="170.8" fill="#d246d6" font-size="12" >弱势当心</text>
<text x="461.0" y="189.3" fill="#f4f4f4" font-size="12" >∠45上升</text>
<text x="473.5" y="181.8" fill="#f4f4f4" font-size="12" >立桩量</text>
<text x="472.0" y="150.8" fill="#f4f4f4" font-size="12" >注意</text>
<text x="492.0" y="124.8" fill="#d246d6" font-size="12" >危险</text>
<text x="502.5" y="131.8" fill="#ffffc8" font-size="12" >莫贪</text>
<text x="541.0" y="99.8" fill="#ffffc8" font-size="12" >莫贪</text>
<text x="493.5" y="158.8" fill="#38c840" font-size="12" >半起步</text>
<text x="521.0" y="158.8" fill="#ffff3c" font-size="12" >追</text>
<text x="533.5" y="158.8" fill="#e8442c" font-size="12" >胆搏</text>
<text x="639.8" y="191.2" fill="#f4f4f4" font-size="12" >出手</text>
<text x="797.5" y="233.3" fill="#e0e0e0" font-size="12" >16.16</text>
<line x1="796.0" y1="228.0" x2="826.0" y2="228.0" stroke="#e0907e" stroke-width="1" />
<text x="843.0" y="212.8" fill="#f4f4f4" font-size="12" >∠</text>
<text x="850.5" y="211.8" fill="#a8ecec" font-size="12" >放心追涨</text>
<text x="874.5" y="210.4" fill="#ffff3c" font-size="12" >追</text>
<text x="860.5" y="196.8" fill="#d246d6" font-size="12" >弱</text>
<text x="881.3" y="195.8" fill="#f4f4f4" font-size="12" >立桩量</text>
<text x="890.0" y="166.8" fill="#f4f4f4" font-size="12" >注意</text>
<text x="901.0" y="169.3" fill="#ffffe0" font-size="12" >莫贪</text>
<text x="946.0" y="181.8" fill="#d246d6" font-size="12" >危</text>
<text x="958.5" y="186.3" fill="#ffff3c" font-size="12" >追</text>
<text x="956.3" y="186.4" fill="#f4f4f4" font-size="12" >∠45上升</text>
<text x="968.0" y="170.8" fill="#ffff3c" font-size="12" >追</text>
<text x="980.0" y="169.3" fill="#e8442c" font-size="12" >胆搏</text>
<text x="976.3" y="151.0" fill="#ffff3c" font-size="12" >追</text>
<text x="967.0" y="144.3" fill="#d246d6" font-size="12" >阶高卖</text>
<text x="948.5" y="206.8" fill="#f4f4f4" font-size="12" >出手</text>
<line x1="7.0" y1="133.0" x2="7.0" y2="141.0" stroke="#58eaea" stroke-width="1" />
<rect x="3.6" y="135.0" width="6.7" height="5.0" fill="#58eaea" />
<line x1="16.7" y1="140.0" x2="16.7" y2="145.0" stroke="#58eaea" stroke-width="1" />
<rect x="13.3" y="140.7" width="6.7" height="3.0" fill="#58eaea" />
<line x1="26.4" y1="141.0" x2="26.4" y2="148.7" stroke="#58eaea" stroke-width="1" />
<rect x="23.0" y="141.0" width="6.7" height="5.0" fill="#58eaea" />
<line x1="36.1" y1="147.0" x2="36.1" y2="160.0" stroke="#58eaea" stroke-width="1" />
<rect x="32.7" y="147.5" width="6.7" height="10.0" fill="#58eaea" />
<line x1="104.0" y1="161.0" x2="104.0" y2="179.6" stroke="#58eaea" stroke-width="1" />
<rect x="100.7" y="161.0" width="6.7" height="18.6" fill="#58eaea" />
<line x1="123.4" y1="165.0" x2="123.4" y2="172.5" stroke="#58eaea" stroke-width="1" />
<rect x="120.0" y="166.4" width="6.7" height="5.0" fill="#58eaea" />
<line x1="133.1" y1="167.0" x2="133.1" y2="175.0" stroke="#8a7ee0" stroke-width="1" />
<rect x="129.8" y="169.5" width="6.7" height="2.5" fill="#8a7ee0" />
<line x1="142.8" y1="174.0" x2="142.8" y2="178.0" stroke="#58eaea" stroke-width="1" />
<rect x="139.4" y="174.5" width="6.7" height="3.0" fill="#58eaea" />
<line x1="152.5" y1="175.0" x2="152.5" y2="181.0" stroke="#58eaea" stroke-width="1" />
<rect x="149.2" y="176.0" width="6.7" height="2.7" fill="#58eaea" />
<line x1="201.0" y1="152.5" x2="201.0" y2="163.7" stroke="#58eaea" stroke-width="1" />
<rect x="197.7" y="152.5" width="6.7" height="11.2" fill="#58eaea" />
<line x1="210.7" y1="165.0" x2="210.7" y2="176.0" stroke="#58eaea" stroke-width="1" />
<rect x="207.3" y="168.0" width="6.7" height="5.7" fill="#58eaea" />
<line x1="220.4" y1="178.0" x2="220.4" y2="192.0" stroke="#58eaea" stroke-width="1" />
<rect x="217.0" y="178.0" width="6.7" height="14.0" fill="#58eaea" />
<line x1="230.1" y1="193.0" x2="230.1" y2="199.4" stroke="#58eaea" stroke-width="1" />
<rect x="226.8" y="193.0" width="6.7" height="6.4" fill="#58eaea" />
<line x1="278.6" y1="190.0" x2="278.6" y2="194.0" stroke="#58eaea" stroke-width="1" />
<rect x="275.2" y="191.0" width="6.7" height="2.0" fill="#58eaea" />
<line x1="307.7" y1="189.0" x2="307.7" y2="193.0" stroke="#8a7ee0" stroke-width="1" />
<rect x="304.3" y="190.0" width="6.7" height="2.5" fill="#8a7ee0" />
<line x1="327.1" y1="185.0" x2="327.1" y2="190.0" stroke="#d246d6" stroke-width="1" />
<rect x="323.7" y="186.0" width="6.7" height="3.0" fill="#d246d6" />
<line x1="365.9" y1="180.0" x2="365.9" y2="187.0" stroke="#8ac8f8" stroke-width="1" />
<rect x="362.5" y="181.0" width="6.7" height="5.0" fill="#8ac8f8" />
<line x1="375.6" y1="185.0" x2="375.6" y2="190.0" stroke="#58eaea" stroke-width="1" />
<rect x="372.2" y="186.0" width="6.7" height="3.0" fill="#58eaea" />
<line x1="385.3" y1="188.0" x2="385.3" y2="193.0" stroke="#58eaea" stroke-width="1" />
<rect x="381.9" y="189.0" width="6.7" height="3.0" fill="#58eaea" />
<line x1="395.0" y1="191.0" x2="395.0" y2="196.0" stroke="#58eaea" stroke-width="1" />
<rect x="391.6" y="192.0" width="6.7" height="3.0" fill="#58eaea" />
<line x1="443.5" y1="181.0" x2="443.5" y2="188.0" stroke="#8ac8f8" stroke-width="1" />
<rect x="440.1" y="182.5" width="6.7" height="5.0" fill="#8ac8f8" />
<line x1="501.7" y1="143.0" x2="501.7" y2="148.0" stroke="#58eaea" stroke-width="1" />
<rect x="498.3" y="143.7" width="6.7" height="3.8" fill="#58eaea" />
<line x1="550.2" y1="116.0" x2="550.2" y2="138.7" stroke="#58eaea" stroke-width="1" />
<rect x="546.8" y="130.0" width="6.7" height="6.0" fill="#58eaea" />
<line x1="559.9" y1="140.0" x2="559.9" y2="153.7" stroke="#58eaea" stroke-width="1" />
<rect x="556.5" y="143.7" width="6.7" height="5.0" fill="#58eaea" />
<line x1="579.3" y1="142.0" x2="579.3" y2="163.0" stroke="#58eaea" stroke-width="1" />
<rect x="575.9" y="150.0" width="6.7" height="12.5" fill="#58eaea" />
<line x1="608.4" y1="165.0" x2="608.4" y2="174.0" stroke="#58eaea" stroke-width="1" />
<rect x="605.0" y="166.0" width="6.7" height="7.7" fill="#58eaea" />
<line x1="618.1" y1="172.0" x2="618.1" y2="186.0" stroke="#58eaea" stroke-width="1" />
<rect x="614.7" y="172.5" width="6.7" height="10.0" fill="#58eaea" />
<line x1="647.2" y1="173.7" x2="647.2" y2="183.5" stroke="#58eaea" stroke-width="1" />
<rect x="643.8" y="178.9" width="6.7" height="4.4" fill="#58eaea" />
<line x1="656.9" y1="182.0" x2="656.9" y2="187.0" stroke="#58eaea" stroke-width="1" />
<rect x="653.5" y="183.0" width="6.7" height="3.0" fill="#58eaea" />
<line x1="666.6" y1="187.0" x2="666.6" y2="191.0" stroke="#58eaea" stroke-width="1" />
<rect x="663.2" y="187.5" width="6.7" height="3.0" fill="#58eaea" />
<line x1="715.1" y1="184.0" x2="715.1" y2="191.0" stroke="#58eaea" stroke-width="1" />
<rect x="711.7" y="185.0" width="6.7" height="3.7" fill="#58eaea" />
<line x1="724.8" y1="186.0" x2="724.8" y2="195.0" stroke="#58eaea" stroke-width="1" />
<rect x="721.4" y="186.0" width="6.7" height="8.5" fill="#58eaea" />
<line x1="734.5" y1="197.0" x2="734.5" y2="204.0" stroke="#58eaea" stroke-width="1" />
<rect x="731.1" y="198.0" width="6.7" height="5.0" fill="#58eaea" />
<line x1="753.9" y1="202.0" x2="753.9" y2="208.0" stroke="#58eaea" stroke-width="1" />
<rect x="750.5" y="203.0" width="6.7" height="4.0" fill="#58eaea" />
<line x1="763.6" y1="204.0" x2="763.6" y2="208.0" stroke="#58eaea" stroke-width="1" />
<rect x="760.2" y="204.5" width="6.7" height="3.0" fill="#58eaea" />
<line x1="773.3" y1="209.0" x2="773.3" y2="220.0" stroke="#58eaea" stroke-width="1" />
<rect x="769.9" y="210.0" width="6.7" height="10.0" fill="#58eaea" />
<line x1="783.0" y1="223.0" x2="783.0" y2="228.0" stroke="#58eaea" stroke-width="1" />
<rect x="779.6" y="223.7" width="6.7" height="3.8" fill="#58eaea" />
<line x1="860.6" y1="198.0" x2="860.6" y2="202.0" stroke="#8a7ee0" stroke-width="1" />
<rect x="857.2" y="198.7" width="6.7" height="2.3" fill="#8a7ee0" />
<line x1="899.4" y1="171.5" x2="899.4" y2="179.0" stroke="#58eaea" stroke-width="1" />
<rect x="896.0" y="177.0" width="6.7" height="1.5" fill="#58eaea" />
<line x1="909.1" y1="180.0" x2="909.1" y2="183.0" stroke="#58eaea" stroke-width="1" />
<rect x="905.7" y="180.4" width="6.7" height="2.2" fill="#58eaea" />
<line x1="918.8" y1="182.0" x2="918.8" y2="186.0" stroke="#58eaea" stroke-width="1" />
<rect x="915.4" y="182.6" width="6.7" height="2.9" fill="#58eaea" />
<rect x="168.3" y="153.1" width="7.1" height="26.3" fill="#ffff3c" />
<rect x="517.5" y="122.0" width="7.1" height="22.5" fill="#ffff3c" />
<rect x="866.8" y="183.0" width="7.1" height="15.0" fill="#ffff3c" />
<rect x="954.0" y="165.3" width="7.1" height="3.5" fill="#ffff3c" />
<rect x="963.8" y="143.0" width="7.1" height="15.1" fill="#ffff3c" />
<rect x="973.4" y="118.2" width="7.1" height="18.8" fill="#ffff3c" />
<text x="953.0" y="37.8" fill="#e8e8e8" font-size="12" >22.52</text>
<line x1="985.0" y1="30.5" x2="1001.0" y2="30.5" stroke="#e0e0e0" stroke-width="1" stroke-dasharray="4 2"/>
<path d="M1000 31.5 L1004.5 28 M1000.8 27.6 L1004.5 28 L1003 31.6" stroke="#e0e0e0" stroke-width="1" fill="none"/>
<text x="1005.5" y="53.3" fill="#ffff3c" font-size="12" >追</text>
<text x="997.0" y="75.3" fill="#ffff3c" font-size="12" >追</text>
<text x="1009.5" y="75.6" fill="#d6d6d6" font-size="12" >0.47 -</text>
<text x="987.0" y="104.3" fill="#ffff3c" font-size="12" >追</text>
<text x="999.5" y="105.6" fill="#d6d6d6" font-size="12" >8.61 - 2</text>
<text x="983.0" y="132.8" fill="#dcdcdc" font-size="12" >16.92 - 18.</text>
<rect x="97.0" y="229.5" width="13.0" height="12.5" fill="#1c7a2a" />
<text x="97.5" y="240.3" fill="#ffffff" font-size="12" >跌</text>
<rect x="776.0" y="229.5" width="13.0" height="12.5" fill="#1c3f80" />
<text x="776.5" y="240.3" fill="#ffffff" font-size="12" >财</text>
<rect x="855.0" y="229.5" width="13.0" height="12.5" fill="#2a8a3a" />
<text x="855.5" y="240.3" fill="#ffffff" font-size="12" >减</text>
<rect x="990.0" y="229.5" width="13.0" height="12.5" fill="#7a5420" />
<text x="990.5" y="240.3" fill="#fff0b0" font-size="12" >将</text>
<rect x="999.3" y="229.5" width="13.0" height="12.5" fill="#6c1410" />
<text x="999.8" y="240.3" fill="#ffeaea" font-size="12" >涨</text>
<text x="6.8" y="20.5" fill="#e8e8e8" font-size="12" >中交地产(日线)</text>
<g transform="translate(98.0 16.2)"><circle r="5.8" fill="#8e8e8e"/><path d="M-2.8 -1.2 L0 1.8 L2.8 -1.2" stroke="#1c1c1c" stroke-width="1.5" fill="none"/></g>
<text x="108.0" y="20.5" fill="#e8e8e8" font-size="12" >A绝品主图(72)</text>
<text x="190.0" y="20.5" fill="#e8e8e8" font-size="12" >压力: 21.51</text>
<line x1="255.5" y1="10.5" x2="255.5" y2="22.0" stroke="#e8584c" stroke-width="1.2" />
<path d="M253.1 14.5 L255.5 10.5 L257.9 14.5" stroke="#e8584c" stroke-width="1.1" fill="none"/>
<text x="266.0" y="20.5" fill="#ffffc4" font-size="12" >支撑: 12.23</text>
<line x1="331.0" y1="10.5" x2="331.0" y2="22.0" stroke="#70d8f0" stroke-width="1.2" />
<path d="M328.6 18.0 L331.0 22.0 L333.4 18.0" stroke="#70d8f0" stroke-width="1.1" fill="none"/>
<text x="342.0" y="20.5" fill="#40c84a" font-size="12" >股价: 20.53</text>
<line x1="407.5" y1="10.5" x2="407.5" y2="22.0" stroke="#e8584c" stroke-width="1.2" />
<path d="M405.1 14.5 L407.5 10.5 L409.9 14.5" stroke="#e8584c" stroke-width="1.1" fill="none"/>
<text x="418.0" y="20.5" fill="#cc48d0" font-size="12" >短线: 20.53</text>
<line x1="483.7" y1="10.5" x2="483.7" y2="22.0" stroke="#e8584c" stroke-width="1.2" />
<path d="M481.3 14.5 L483.7 10.5 L486.1 14.5" stroke="#e8584c" stroke-width="1.1" fill="none"/>
<text x="493.7" y="20.5" fill="#f0f0f0" font-size="12" >弱: 16.22</text>
<line x1="547.5" y1="10.5" x2="547.5" y2="22.0" stroke="#e8584c" stroke-width="1.2" />
<path d="M545.1 14.5 L547.5 10.5 L549.9 14.5" stroke="#e8584c" stroke-width="1.1" fill="none"/>
<text x="557.5" y="20.5" fill="#e23c2c" font-size="12" >强: 16.22</text>
<line x1="611.7" y1="10.5" x2="611.7" y2="22.0" stroke="#e8584c" stroke-width="1.2" />
<path d="M609.3 14.5 L611.7 10.5 L614.1 14.5" stroke="#e8584c" stroke-width="1.1" fill="none"/>
<text x="622.5" y="20.5" fill="#40c84a" font-size="12" >顶部: 22.52</text>
<line x1="687.5" y1="10.5" x2="687.5" y2="22.0" stroke="#e8584c" stroke-width="1.2" />
<path d="M685.1 14.5 L687.5 10.5 L689.9 14.5" stroke="#e8584c" stroke-width="1.1" fill="none"/>
<text x="698.0" y="20.5" fill="#f0a888" font-size="12" >底部: 11.34</text>
<line x1="763.7" y1="10.5" x2="763.7" y2="22.0" stroke="#e8584c" stroke-width="1.2" />
<path d="M761.3 14.5 L763.7 10.5 L766.1 14.5" stroke="#e8584c" stroke-width="1.1" fill="none"/>
<path d="M1013.4 11.5 L1018.6 16.7 L1013.4 21.9 L1008.2 16.7 Z" stroke="#828282" stroke-width="1.1" fill="none"/>
<rect x="1026.5" y="11.3" width="11" height="10.4" rx="1.8" stroke="#828282" stroke-width="1.2" fill="none"/>
<rect x="1032.6" y="13.2" width="3.0" height="6.6" fill="#828282" />
<rect x="4.6" y="262.8" width="1008.6" height="368.0" fill="#004a31" />
<text transform="translate(57.5 382.5) rotate(-44)" text-anchor="middle" font-size="24" fill="#15553d">www.cfchi.com</text>
<text transform="translate(342.0 382.5) rotate(-44)" text-anchor="middle" font-size="24" fill="#15553d">www.cfchi.com</text>
<text transform="translate(626.5 382.5) rotate(-44)" text-anchor="middle" font-size="24" fill="#15553d">www.cfchi.com</text>
<text transform="translate(911.0 382.5) rotate(-44)" text-anchor="middle" font-size="24" fill="#15553d">www.cfchi.com</text>
<line x1="1016.0" y1="337.5" x2="1040.0" y2="337.5" stroke="#581e1c" stroke-width="1" stroke-dasharray="2 2" shape-rendering="crispEdges"/>
<line x1="1016.0" y1="337.5" x2="1040.0" y2="337.5" stroke="#7a4042" stroke-width="1" stroke-dasharray="1 3" shape-rendering="crispEdges"/>
<line x1="1043.0" y1="337.5" x2="1047.5" y2="337.5" stroke="#6a4040" stroke-width="1" shape-rendering="crispEdges"/>
<line x1="1016.0" y1="410.5" x2="1040.0" y2="410.5" stroke="#581e1c" stroke-width="1" stroke-dasharray="2 2" shape-rendering="crispEdges"/>
<line x1="1016.0" y1="410.5" x2="1040.0" y2="410.5" stroke="#7a4042" stroke-width="1" stroke-dasharray="1 3" shape-rendering="crispEdges"/>
<line x1="1043.0" y1="410.5" x2="1047.5" y2="410.5" stroke="#6a4040" stroke-width="1" shape-rendering="crispEdges"/>
<line x1="1016.0" y1="483.5" x2="1040.0" y2="483.5" stroke="#581e1c" stroke-width="1" stroke-dasharray="2 2" shape-rendering="crispEdges"/>
<line x1="1016.0" y1="483.5" x2="1040.0" y2="483.5" stroke="#7a4042" stroke-width="1" stroke-dasharray="1 3" shape-rendering="crispEdges"/>
<line x1="1043.0" y1="483.5" x2="1047.5" y2="483.5" stroke="#6a4040" stroke-width="1" shape-rendering="crispEdges"/>
<line x1="1016.0" y1="556.5" x2="1040.0" y2="556.5" stroke="#581e1c" stroke-width="1" stroke-dasharray="2 2" shape-rendering="crispEdges"/>
<line x1="1016.0" y1="556.5" x2="1040.0" y2="556.5" stroke="#7a4042" stroke-width="1" stroke-dasharray="1 3" shape-rendering="crispEdges"/>
<line x1="1043.0" y1="556.5" x2="1047.5" y2="556.5" stroke="#6a4040" stroke-width="1" shape-rendering="crispEdges"/>
<g transform="translate(10.8 252.0)"><circle r="5.8" fill="#8e8e8e"/><path d="M-2.8 -1.2 L0 1.8 L2.8 -1.2" stroke="#1c1c1c" stroke-width="1.5" fill="none"/></g>
<text x="21.2" y="256.6" fill="#f0f0f0" font-size="12" >天王星一号</text>
<text x="87.0" y="256.6" fill="#f4f4f4" font-size="12" >DD: 80.94</text>
<line x1="145.0" y1="246.0" x2="145.0" y2="258.0" stroke="#e8584c" stroke-width="1.2" />
<path d="M142.6 250.0 L145.0 246.0 L147.4 250.0" stroke="#e8584c" stroke-width="1.1" fill="none"/>
<text x="157.0" y="256.6" fill="#8a8a6a" font-size="12" >FF: 73.02</text>
<line x1="211.7" y1="246.0" x2="211.7" y2="258.0" stroke="#e8584c" stroke-width="1.2" />
<path d="M209.3 250.0 L211.7 246.0 L214.1 250.0" stroke="#e8584c" stroke-width="1.1" fill="none"/>
<text x="271.5" y="256.6" fill="#cc48d0" font-size="12" >GG: 60.11</text>
<line x1="330.0" y1="246.0" x2="330.0" y2="258.0" stroke="#e8584c" stroke-width="1.2" />
<path d="M327.6 250.0 L330.0 246.0 L332.4 250.0" stroke="#e8584c" stroke-width="1.1" fill="none"/>
<text x="340.0" y="256.6" fill="#ffffc4" font-size="12" >时机: 20.00</text>
<line x1="7.0" y1="557.0" x2="1007.0" y2="557.0" stroke="#e8ff30" stroke-width="2.2" />
<polyline points="7.5,607.5 25.0,612.0 42.5,615.0 65.0,615.0 75.0,610.0 85.0,602.0 95.0,602.5 105.0,606.0 120.0,599.5 132.5,595.8 147.5,598.0 162.5,600.0 191.0,558.0 201.0,555.8 210.0,559.5 225.0,573.8 240.0,581.0 260.0,583.5 277.7,588.5 290.0,588.8 300.0,587.5 311.6,588.8 318.0,583.0 328.0,579.7 348.0,579.7 356.8,569.7 367.0,569.7 375.7,575.0 390.8,579.0 411.0,579.7 423.4,575.0 434.7,562.4 443.5,560.4 452.0,555.0 461.0,541.6 468.6,525.0 471.4,521.0 480.2,500.7 491.5,461.8 502.8,446.7 512.9,432.9 520.4,411.5 530.5,395.2 541.8,386.4 550.6,386.4 560.6,392.7 573.2,402.7 585.7,417.8 598.3,429.0 610.9,442.9 618.4,456.7 631.0,468.0 641.0,475.6 653.6,493.0 666.0,507.0 678.7,517.0 697.6,527.3 707.6,529.0 717.7,537.9 735.3,559.2 752.9,570.5 768.0,580.6 780.5,589.4 790.6,593.7 810.7,593.7 823.2,590.0 835.8,583.0 850.9,572.6 862.2,568.0 868.4,555.5 876.0,537.9 886.0,519.0 898.6,495.0 908.6,479.5 918.7,468.8 933.7,452.3 947.4,441.0 957.4,417.4 979.9,370.0 987.4,358.7 1006.0,333.7" fill="none" stroke="#f6f6f6" stroke-width="1.9" stroke-linejoin="round" stroke-linecap="round" />
<polyline points="7.5,605.0 25.0,609.0 47.5,613.0 70.0,613.0 85.0,609.0 110.0,606.0 135.0,601.0 162.0,600.0 175.0,594.0 190.0,579.0 200.0,571.0 212.0,566.0 225.0,570.0 240.0,575.0 260.0,580.5 282.7,585.5 305.0,586.8 318.0,585.0 335.5,581.8 348.0,580.5 358.0,576.7 368.0,574.2 380.7,576.0 400.8,578.0 416.0,577.5 431.0,573.0 446.0,568.0 458.6,560.4 468.6,549.0 476.0,537.8 485.2,521.0 497.8,493.0 510.4,468.0 522.9,442.9 535.5,422.8 548.0,407.7 560.6,401.5 570.7,401.5 583.2,406.5 598.3,415.3 610.9,425.3 623.4,440.4 636.0,453.0 651.0,468.0 666.0,483.0 681.2,498.0 695.0,511.5 712.7,522.8 730.3,537.9 747.8,553.0 765.4,566.8 780.5,576.8 795.6,585.0 810.7,588.9 823.2,588.9 840.8,584.4 858.4,578.0 871.0,568.0 881.0,555.5 893.6,535.4 906.0,512.8 918.7,495.2 931.3,479.0 947.4,462.3 964.9,434.8 979.9,407.4 1006.0,363.0" fill="none" stroke="#6f9028" stroke-width="1.9" stroke-linejoin="round" stroke-linecap="round" />
<polyline points="7.5,600.0 25.0,604.0 47.0,607.5 65.0,610.0 85.0,610.0 110.0,608.0 135.0,604.5 162.0,602.5 175.0,600.0 190.0,592.5 205.0,585.0 220.0,579.0 240.0,575.0 260.0,576.7 285.0,580.5 305.0,583.5 315.0,585.0 328.0,583.8 348.0,582.5 365.6,580.0 380.7,578.0 400.8,576.7 416.0,577.5 431.0,576.0 448.5,571.7 463.6,566.7 476.0,559.0 486.0,547.8 496.0,534.0 506.6,521.0 520.4,496.9 535.5,470.6 548.0,453.0 560.6,437.9 573.2,426.6 585.7,420.3 598.3,418.5 610.9,419.8 623.4,424.8 638.5,434.0 653.6,446.7 668.6,459.2 683.7,471.8 695.0,483.9 712.7,499.0 730.3,512.8 747.8,526.6 765.4,540.4 780.5,553.0 795.6,563.0 810.7,571.8 825.7,577.6 840.8,580.6 855.9,581.4 868.4,580.0 881.0,574.3 893.6,564.3 906.0,550.5 918.7,535.4 931.3,519.0 944.0,502.7 961.0,480.0 979.9,452.3 1006.0,410.4" fill="none" stroke="#cf4ad6" stroke-width="2.7" stroke-linejoin="round" stroke-linecap="round" />
<text x="462.3" y="600.2" fill="#f0f0f0" font-size="12" >天王星</text>
<text x="879.8" y="600.2" fill="#f0f0f0" font-size="12" >天王星</text>
</svg>
</body></html>
